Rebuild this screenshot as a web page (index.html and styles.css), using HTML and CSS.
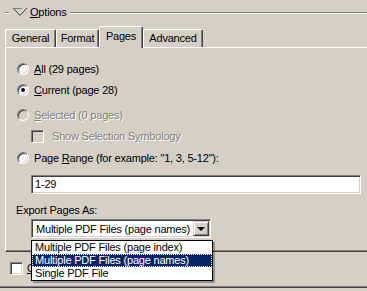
FILE: index.html
```html
<!DOCTYPE html>
<html lang="en">
<head>
    <meta charset="UTF-8">
    <title>Export Options</title>
    <link rel="stylesheet" href="styles.css">
</head>
<body>
    <!-- Options group header -->
    <div class="header">
        <span class="etch short"></span>
        <svg class="twisty" width="15" height="9" viewBox="0 0 15 9">
            <polyline points="0.5,0.5 9,0.5" stroke="#808080" fill="none"/>
            <polyline points="0.5,0.5 7,7.5" stroke="#404040" fill="none"/>
            <polyline points="7,7.5 14,0" stroke="#404040" fill="none"/>
        </svg>
        <span class="title"><u>O</u>ptions</span>
        <span class="etch long"></span>
    </div>

    <!-- Tabs -->
    <div class="tabs">
        <div class="tab tab-general">General</div>
        <div class="tab tab-format">Format</div>
        <div class="tab tab-pages active">Pages</div>
        <div class="tab tab-advanced">Advanced</div>
    </div>

    <!-- Pages tab -->
    <div class="panel">
        <div class="row row-all">
            <span class="radio"></span>
            <span><u>A</u>ll (29 pages)</span>
        </div>
        <div class="row row-current">
            <span class="radio checked"></span>
            <span><u>C</u>urrent (page 28)</span>
        </div>
        <div class="row row-selected disabled">
            <span class="radio"></span>
            <span><u>S</u>elected (0 pages)</span>
        </div>
        <div class="row row-symbology disabled">
            <span class="checkbox"></span>
            <span>Show Selection S<u>y</u>mbology</span>
        </div>
        <div class="row row-range">
            <span class="radio"></span>
            <span>Page <u>R</u>ange (for example: "1, 3, 5-12"):</span>
        </div>
        <div class="textbox">1-29</div>
        <div class="label">Export Pages As:</div>
        <div class="select">
            <span class="select-value">Multiple PDF Files (page names)</span>
            <span class="select-button"><span class="arrow"></span></span>
            <ul class="dropdown">
                <li>Multiple PDF Files (page index)</li>
                <li class="selected">Multiple PDF Files (page names)</li>
                <li>Single PDF File</li>
            </ul>
        </div>
    </div>

    <!-- Partly hidden behind the open list -->
    <div class="row row-clip">
        <span class="checkbox"></span>
        <span class="clip-label"><u>C</u>lip Output to Graphics Extent</span>
    </div>

    <div class="bottom-line"></div>
</body>
</html>
```

FILE: styles.css
```css
body {
    margin: 0;
    width: 367px;
    height: 291px;
    overflow: hidden;
    background-color: #d4d0c8;
    color: #000;
    font-family: "Liberation Sans", Arial, sans-serif;
    font-size: 11px;
    letter-spacing: -0.2px;
    white-space: nowrap;
}

u {
    text-decoration: underline;
}

/* Group header */
.header {
    display: flex;
    align-items: flex-start;
    height: 25px;
    padding-left: 5px;
}

.etch {
    margin-top: 12px;
    height: 0;
    border-top: 1px solid #808080;
    border-bottom: 1px solid #fff;
}

.etch.short {
    width: 4px;
}

.etch.long {
    flex: 1;
    margin-left: 3px;
}

.twisty {
    margin-top: 8px;
    margin-left: 4px;
}

.title {
    margin-left: 2px;
    margin-top: 5px;
    line-height: 14px;
}

/* Tabs */
.tabs {
    display: flex;
    align-items: flex-end;
    height: 22px;
    padding-left: 5px;
}

.tab {
    box-sizing: border-box;
    height: 18px;
    line-height: 16px;
    text-align: center;
    border-top: 1px solid #fff;
    border-left: 1px solid #fff;
    border-right: 1px solid #404040;
    border-top-left-radius: 2px;
    border-top-right-radius: 2px;
    box-shadow: inset -1px 0 #808080;
}

.tab-general { width: 51px; }
.tab-format { width: 43px; }
.tab-pages { width: 44px; }
.tab-advanced { width: 60px; }

.tab.active {
    position: relative;
    z-index: 1;
    height: 22px;
    margin-bottom: -1px;
    line-height: 19px;
    background-color: #d4d0c8;
}

/* Panel, its right edge lies past the window */
.panel {
    width: 360px;
    margin-right: -20px;
    padding: 0 0 13px 11px;
    border-top: 1px solid #fff;
    border-left: 1px solid #fff;
    border-bottom: 1px solid #404040;
    box-shadow: inset 0 -1px #808080;
    margin-left: 5px;
}

.row {
    display: flex;
    align-items: center;
    height: 20px;
}

.row-all { padding-top: 11px; }
.row-current { margin-top: 1px; }
.row-selected { margin-top: 5px; }
.row-symbology { margin-top: 1px; margin-left: 14px; }
.row-range { margin-top: 2px; }

.disabled {
    color: #808080;
    text-shadow: 1px 1px #fff;
}

.radio {
    box-sizing: border-box;
    width: 12px;
    height: 12px;
    margin-right: 5px;
    border-radius: 50%;
    border: 1px solid;
    border-color: #808080 #fff #fff #808080;
    box-shadow: inset 1px 1px #404040, inset -1px -1px #d4d0c8;
    background-color: #fff;
    display: flex;
    align-items: center;
    justify-content: center;
}

.radio.checked::after {
    content: "";
    width: 4px;
    height: 4px;
    border-radius: 50%;
    background-color: #000;
}

.disabled .radio,
.disabled .checkbox {
    background-color: #d4d0c8;
}

.checkbox {
    box-sizing: border-box;
    width: 13px;
    height: 13px;
    margin-right: 8px;
    border: 1px solid;
    border-color: #808080 #fff #fff #808080;
    box-shadow: inset 1px 1px #404040, inset -1px -1px #d4d0c8;
    background-color: #fff;
}

.textbox,
.select {
    box-sizing: border-box;
    height: 19px;
    margin-left: 14px;
    border: 1px solid;
    border-color: #808080 #fff #fff #808080;
    box-shadow: inset 1px 1px #404040, inset -1px -1px #d4d0c8;
    background-color: #fff;
}

.textbox {
    width: 330px;
    margin-top: 7px;
    padding-left: 3px;
    line-height: 17px;
}

.label {
    margin-top: 8px;
    margin-left: -1px;
    line-height: 16px;
}

.select {
    position: relative;
    display: flex;
    align-items: center;
    width: 180px;
    margin-top: 1px;
    padding: 1px 1px 1px 4px;
}

.select-value {
    flex: 1;
    overflow: hidden;
}

.select-button {
    box-sizing: border-box;
    display: flex;
    align-items: center;
    justify-content: center;
    width: 16px;
    height: 15px;
    border: 1px solid;
    border-color: #d4d0c8 #404040 #404040 #d4d0c8;
    box-shadow: inset 1px 1px #fff, inset -1px -1px #808080;
    background-color: #d4d0c8;
}

.arrow {
    width: 0;
    height: 0;
    border-left: 4px solid transparent;
    border-right: 4px solid transparent;
    border-top: 4px solid #000;
}

/* Open dropdown list */
.dropdown {
    position: absolute;
    top: 20px;
    left: -1px;
    z-index: 2;
    width: 180px;
    margin: 0;
    padding: 0;
    list-style: none;
    border: 1px solid #000;
    background-color: #fff;
    box-shadow: 2px 2px 0 rgba(0, 0, 0, 0.3);
}

.dropdown li {
    height: 13px;
    line-height: 13px;
    padding-left: 3px;
}

.dropdown li.selected {
    background-color: #0a246a;
    color: #fff;
    outline: 1px dotted #fff;
    outline-offset: -1px;
}

.row-clip {
    margin-top: 6px;
    margin-left: 10px;
}

.row-clip .checkbox {
    margin-right: 4px;
}

.bottom-line {
    margin-top: 8px;
    border-top: 1px solid #808080;
    border-bottom: 1px solid #404040;
}
```
